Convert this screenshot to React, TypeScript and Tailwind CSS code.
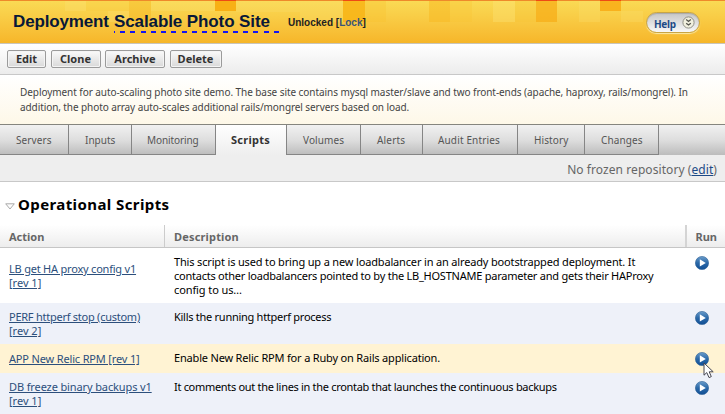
import type { ReactNode } from "react";

const SANS = "font-['Noto_Sans','Open_Sans',sans-serif]";

type Tile = { x: number; y: number; w: number; h: number; fill: string; o: number };

const tiles: Tile[] = [
  { x: 65, y: 1, w: 21, h: 10, fill: "#fbe277", o: 0.3 },
  { x: 86, y: 1, w: 43, h: 10, fill: "#f7c02c", o: 0.15 },
  { x: 108, y: 11, w: 21, h: 11, fill: "#fbe277", o: 0.3 },
  { x: 129, y: 1, w: 22, h: 21, fill: "#f5b31f", o: 0.4 },
  { x: 151, y: 1, w: 64, h: 10, fill: "#fbe277", o: 0.25 },
  { x: 215, y: 1, w: 21, h: 10, fill: "#f8ae12", o: 0.95 },
  { x: 236, y: 1, w: 64, h: 11, fill: "#fbe277", o: 0.2 },
  { x: 300, y: 1, w: 43, h: 21, fill: "#fbe277", o: 0.25 },
  { x: 343, y: 1, w: 22, h: 21, fill: "#f8b415", o: 0.85 },
  { x: 365, y: 1, w: 21, h: 21, fill: "#f7bf2a", o: 0.3 },
  { x: 429, y: 1, w: 21, h: 21, fill: "#f8b820", o: 0.5 },
  { x: 450, y: 1, w: 22, h: 21, fill: "#f7c433", o: 0.3 },
  { x: 493, y: 1, w: 22, h: 21, fill: "#fce57c", o: 0.35 },
  { x: 515, y: 1, w: 21, h: 21, fill: "#f7c433", o: 0.25 },
  { x: 536, y: 1, w: 21, h: 21, fill: "#f7ae18", o: 0.75 },
  { x: 579, y: 1, w: 21, h: 21, fill: "#fbe277", o: 0.25 },
  { x: 600, y: 1, w: 21, h: 10, fill: "#f8ab15", o: 0.85 },
  { x: 621, y: 11, w: 22, h: 11, fill: "#fbe277", o: 0.25 },
];

const redTips = [
  [215, 21],
  [343, 22],
  [536, 21],
  [600, 21],
];

function HeaderTiles() {
  return (
    <svg className="absolute inset-0" width="725" height="43" viewBox="0 0 725 43" shapeRendering="crispEdges">
      {tiles.map((t) => (
        <rect key={`${t.x}-${t.y}`} x={t.x} y={t.y} width={t.w} height={t.h} fill={t.fill} opacity={t.o} />
      ))}
      <rect x="0" y="0" width="725" height="1" fill="#ee8a2a" />
      {redTips.map(([x, w]) => (
        <rect key={x} x={x} y="0" width={w} height="1" fill="#ee4a14" />
      ))}
    </svg>
  );
}

function HelpButton() {
  return (
    <div className="mt-3 mr-[25px] flex h-[21px] w-[54px] items-center justify-between rounded-full border border-[#c9a544] bg-linear-to-b from-[#c6c6c6] to-[#f8f8f8] pr-1 pl-[7px] shadow-[inset_0_1px_1px_#a9a9a9,0_1px_1px_#fae9a8]">
      <span className={`${SANS} mt-[3px] text-[10px] leading-3 font-bold tracking-[-0.3px] text-[#1d4a86]`}>Help</span>
      <svg width="13" height="13" viewBox="0 0 13 13" fill="none" className="-mt-px">
        <circle cx="6.5" cy="6.5" r="5.6" fill="#f1f0df" stroke="#8f8f86" />
        <path d="M4.2 3.6 6.5 5.4 8.8 3.6M4.2 7.2 6.5 9 8.8 7.2" stroke="#55554d" strokeWidth="1.3" />
      </svg>
    </div>
  );
}

function ToolButton({ width, children }: { width: string; children: ReactNode }) {
  return (
    <button
      className={`${width} h-[18px] rounded-[2px] border border-[#9b9b9b] bg-linear-to-b from-[#fafafa] to-[#d9d9d9] text-center text-[11px] leading-4 font-bold text-[#333] shadow-[inset_0_0_0_1px_#f4f4f4]`}
    >
      {children}
    </button>
  );
}

const tabs = [
  { label: "Servers", width: "w-[69px]", text: "pl-4 tracking-[0.1px]" },
  { label: "Inputs", width: "w-[63px]", text: "pl-4 tracking-[0.02px]" },
  { label: "Monitoring", width: "w-[84px]", text: "pl-[15px] tracking-[-0.1px]" },
  { label: "Scripts", width: "w-[71px]", text: "pl-[15px] tracking-[0.25px]", active: true },
  { label: "Volumes", width: "w-[74px]", text: "pl-4 tracking-[0.1px]" },
  { label: "Alerts", width: "w-[62px]", text: "pl-4 tracking-[0.2px]" },
  { label: "Audit Entries", width: "w-[95px]", text: "pl-[15px] tracking-[0.15px]" },
  { label: "History", width: "w-[67px]", text: "pl-4 tracking-[0.1px]" },
  { label: "Changes", width: "w-[74px]", text: "pl-4 tracking-[0.1px]" },
];

type Line = { text: string; track: string };
type Script = { name: Line[]; description: Line[]; row: string; nameTop: string; descTop: string; iconTop: string; hovered?: boolean };

const scripts: Script[] = [
  {
    name: [
      { text: "LB get HA proxy config v1", track: "tracking-[-0.21px]" },
      { text: "[rev 1]", track: "tracking-[0px]" },
    ],
    description: [
      { text: "This script is used to bring up a new loadbalancer in an already bootstrapped deployment. It", track: "tracking-[-0.16px]" },
      { text: "contacts other loadbalancers pointed to by the LB_HOSTNAME parameter and gets their HAProxy", track: "tracking-[-0.24px]" },
      { text: "config to us…", track: "tracking-[-0.1px]" },
    ],
    row: "h-[55px] bg-white",
    nameTop: "pt-[14px]",
    descTop: "pt-[7px]",
    iconTop: "pt-[8px]",
  },
  {
    name: [
      { text: "PERF httperf stop (custom)", track: "tracking-[-0.25px]" },
      { text: "[rev 2]", track: "tracking-[0px]" },
    ],
    description: [{ text: "Kills the running httperf process", track: "tracking-[-0.27px]" }],
    row: "h-[41px] bg-[#eef1f9]",
    nameTop: "pt-[7px]",
    descTop: "pt-[7px]",
    iconTop: "pt-[8px]",
  },
  {
    name: [{ text: "APP New Relic RPM [rev 1]", track: "tracking-[-0.16px]" }],
    description: [{ text: "Enable New Relic RPM for a Ruby on Rails application.", track: "tracking-[-0.18px]" }],
    row: "h-[29px] bg-[#fff3d3]",
    nameTop: "pt-[8px]",
    descTop: "pt-[7px]",
    iconTop: "pt-[8px]",
    hovered: true,
  },
  {
    name: [
      { text: "DB freeze binary backups v1", track: "tracking-[-0.12px]" },
      { text: "[rev 1]", track: "tracking-[0px]" },
    ],
    description: [{ text: "It comments out the lines in the crontab that launches the continuous backups", track: "tracking-[-0.31px]" }],
    row: "h-[41px] bg-[#eef1f9]",
    nameTop: "pt-[7px]",
    descTop: "pt-[7px]",
    iconTop: "pt-[8px]",
  },
];

function RunIcon() {
  return (
    <svg width="14" height="14" viewBox="0 0 14 14">
      <defs>
        <linearGradient id="run-fill" x1="0" y1="0" x2="0" y2="1">
          <stop offset="0" stopColor="#6b9dcb" />
          <stop offset="0.5" stopColor="#2a68a8" />
          <stop offset="1" stopColor="#114f96" />
        </linearGradient>
      </defs>
      <circle cx="7" cy="7" r="6.6" fill="url(#run-fill)" stroke="#2c5f96" strokeWidth="0.6" />
      <path d="M4.8 3.2V10.6L10.8 6.9Z" fill="#fff" />
    </svg>
  );
}

function Pointer() {
  return (
    <svg className="absolute top-[10px] left-[8px]" width="13" height="19" viewBox="0 0 13 19">
      <path
        d="M1 1V13.2L3.8 10.6L6 15.6L8.3 14.6L6.2 9.8H10.2Z"
        fill="#fff"
        stroke="#45454f"
        strokeWidth="1"
      />
    </svg>
  );
}

export default function App() {
  return (
    <div className={`${SANS} h-[414px] w-[725px] overflow-hidden bg-white text-black`}>
      <header className="relative flex h-[44px] justify-between border-b border-[#c9c5bb] bg-linear-to-b from-[#fadb55] to-[#f6b629]">
        <HeaderTiles />
        <div className="relative flex pl-[13px] font-['Liberation_Sans',Arial,sans-serif] font-bold whitespace-nowrap text-[#081838]">
          <h1 className="flex text-[17px] leading-5">
            <span className="w-[101px] pt-[12px] tracking-[-0.15px]">Deployment</span>
            <span className="h-[33px] w-[165px] bg-[repeating-linear-gradient(90deg,#1414f0_0_0.75px,transparent_0.75px_6px,#1414f0_6px_10.25px)] bg-[length:100%_2px] bg-bottom bg-no-repeat pt-[12px] tracking-[-0.1px]">
              Scalable Photo Site
            </span>
          </h1>
          <span className="pt-[17px] pl-[9px] text-[10px] leading-3 text-[#222]">
            Unlocked [<a className="text-[#3a5578]">Lock</a>]
          </span>
        </div>
        <div className="relative">
          <HelpButton />
        </div>
      </header>

      <div className="flex h-[31px] gap-[4.5px] border-b border-[#c8c8c8] bg-linear-to-b from-white to-[#ececec] pt-[5.5px] pl-[7px]">
        <ToolButton width="w-[39px]">Edit</ToolButton>
        <ToolButton width="w-[50px]">Clone</ToolButton>
        <ToolButton width="w-[60px]">Archive</ToolButton>
        <ToolButton width="w-[52px]">Delete</ToolButton>
      </div>

      <div className="h-[49px] bg-linear-to-b from-white to-[#fef8e8] pt-[10px] pl-5 text-[10px] leading-[14.5px] whitespace-nowrap text-[#444]">
        <p className="tracking-[-0.066px]">
          Deployment for auto-scaling photo site demo. The base site contains mysql master/slave and two front-ends (apache, haproxy, rails/mongrel). In
        </p>
        <p className="tracking-[-0.085px]">
          addition, the photo array auto-scales additional rails/mongrel servers based on load.
        </p>
      </div>

      <nav className="flex h-[31px] border-t border-[#85857e] bg-linear-to-b from-[#f1f1f1] via-[#dedede] to-[#bcbcbc] text-[10px] leading-[30px] whitespace-nowrap text-[#555]">
        {tabs.map((t) => (
          <a
            key={t.label}
            className={`${t.width} ${t.text} border-r border-[#858585] ${
              t.active ? "bg-linear-to-b from-white to-[#eee] text-[11px] font-bold text-[#333]" : "border-b"
            }`}
          >
            {t.label}
          </a>
        ))}
      </nav>

      <div className="flex h-[27px] justify-end border-b border-[#c8c8c8] bg-[#eee] pt-[7px] pr-[8px] text-[12px] leading-4 tracking-[0.07px] text-[#666]">
        <p>
          No frozen repository (<a className="text-[#1d4a86] underline">edit</a>)
        </p>
      </div>

      <div className="flex h-[43px] items-start gap-[3px] pt-[12px] pl-[5px]">
        <svg width="10" height="7" viewBox="0 0 10 7" className="mt-[9px]">
          <path d="M0.7 0.8H9.3L5 6Z" fill="#fdfdfd" stroke="#aaa" />
        </svg>
        <h2 className="text-[15px] leading-5 font-bold tracking-[0.4px]">Operational Scripts</h2>
      </div>

      <div className="flex h-[23px] border-b border-[#c6c6c6] bg-linear-to-b from-white to-[#ededed] text-[11px] leading-6 font-bold text-[#666]">
        <div className="w-[165px] border-r border-[#ccc] pl-[9px]">Action</div>
        <div className="w-[522px] border-r-2 border-[#d4d4d4] pl-[9px] tracking-[0.17px]">Description</div>
        <div className="pl-[8.5px]">Run</div>
      </div>

      {scripts.map((s, i) => (
        <div key={i} className={`${s.row} flex text-[11px] leading-[14px] whitespace-nowrap`}>
          <div className={`${s.nameTop} w-[174px] pl-[9px] text-[#2c4f7c]`}>
            {s.name.map((l) => (
              <a key={l.text} className={`${l.track} block underline`}>
                {l.text}
              </a>
            ))}
          </div>
          <div className={`${s.descTop} w-[521px]`}>
            {s.description.map((l) => (
              <p key={l.text} className={l.track}>
                {l.text}
              </p>
            ))}
          </div>
          <div className={s.iconTop}>
            <div className="relative">
              <RunIcon />
              {s.hovered && <Pointer />}
            </div>
          </div>
        </div>
      ))}
    </div>
  );
}
